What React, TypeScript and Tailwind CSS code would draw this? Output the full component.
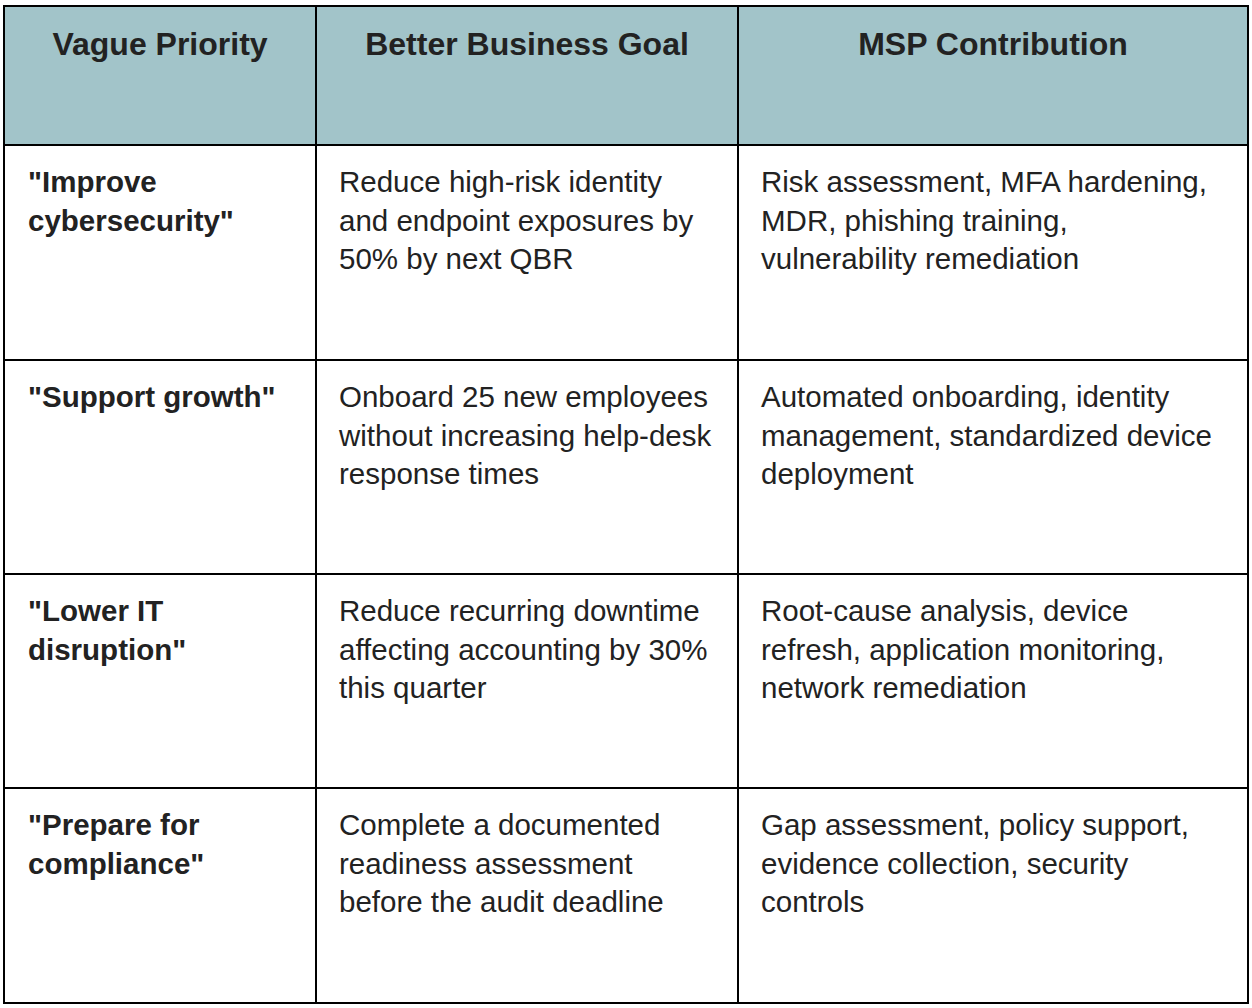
const rows: { priority: string[]; goal: string[]; contribution: string[]; height: string }[] = [
  {
    priority: ['"Improve', 'cybersecurity"'],
    goal: ["Reduce high-risk identity", "and endpoint exposures by", "50% by next QBR"],
    contribution: ["Risk assessment, MFA hardening,", "MDR, phishing training,", "vulnerability remediation"],
    height: "h-[215px] border-b-2",
  },
  {
    priority: ['"Support growth"'],
    goal: ["Onboard 25 new employees", "without increasing help-desk", "response times"],
    contribution: ["Automated onboarding, identity", "management, standardized device", "deployment"],
    height: "h-[214px] border-b-2",
  },
  {
    priority: ['"Lower IT', 'disruption"'],
    goal: ["Reduce recurring downtime", "affecting accounting by 30%", "this quarter"],
    contribution: ["Root-cause analysis, device", "refresh, application monitoring,", "network remediation"],
    height: "h-[214px] border-b-2",
  },
  {
    priority: ['"Prepare for', 'compliance"'],
    goal: ["Complete a documented", "readiness assessment", "before the audit deadline"],
    contribution: ["Gap assessment, policy support,", "evidence collection, security", "controls"],
    height: "h-[213px]",
  },
];

function Lines({ lines }: { lines: string[] }) {
  return (
    <>
      {lines.map((l) => (
        <div key={l} className="whitespace-nowrap">
          {l}
        </div>
      ))}
    </>
  );
}

export default function App() {
  return (
    <div className="min-h-screen bg-white pl-[3px] pt-[5px] font-['Liberation_Sans',Arial,sans-serif] text-[#222]">
      <div className="w-[1246px] border-2 border-black">
        {/* Header */}
        <div className="grid h-[139px] grid-cols-[312px_422px_508px] border-b-2 border-black bg-[#a2c4c9] text-[32px] font-bold leading-[42px]">
          <div className="border-r-2 border-black pt-[16px] text-center">Vague Priority</div>
          <div className="border-r-2 border-black pt-[16px] text-center">Better Business Goal</div>
          <div className="pt-[16px] text-center">MSP Contribution</div>
        </div>

        {/* Body rows */}
        {rows.map((r, i) => (
          <div
            key={i}
            className={`grid grid-cols-[312px_422px_508px] border-black text-[29.5px] leading-[38.5px] ${r.height}`}
          >
            <div className="border-r-2 border-black pl-[23px] pt-[17px] font-bold">
              <Lines lines={r.priority} />
            </div>
            <div className="border-r-2 border-black pl-[22px] pt-[17px]">
              <Lines lines={r.goal} />
            </div>
            <div className="pl-[22px] pt-[17px]">
              <Lines lines={r.contribution} />
            </div>
          </div>
        ))}
      </div>
    </div>
  );
}
